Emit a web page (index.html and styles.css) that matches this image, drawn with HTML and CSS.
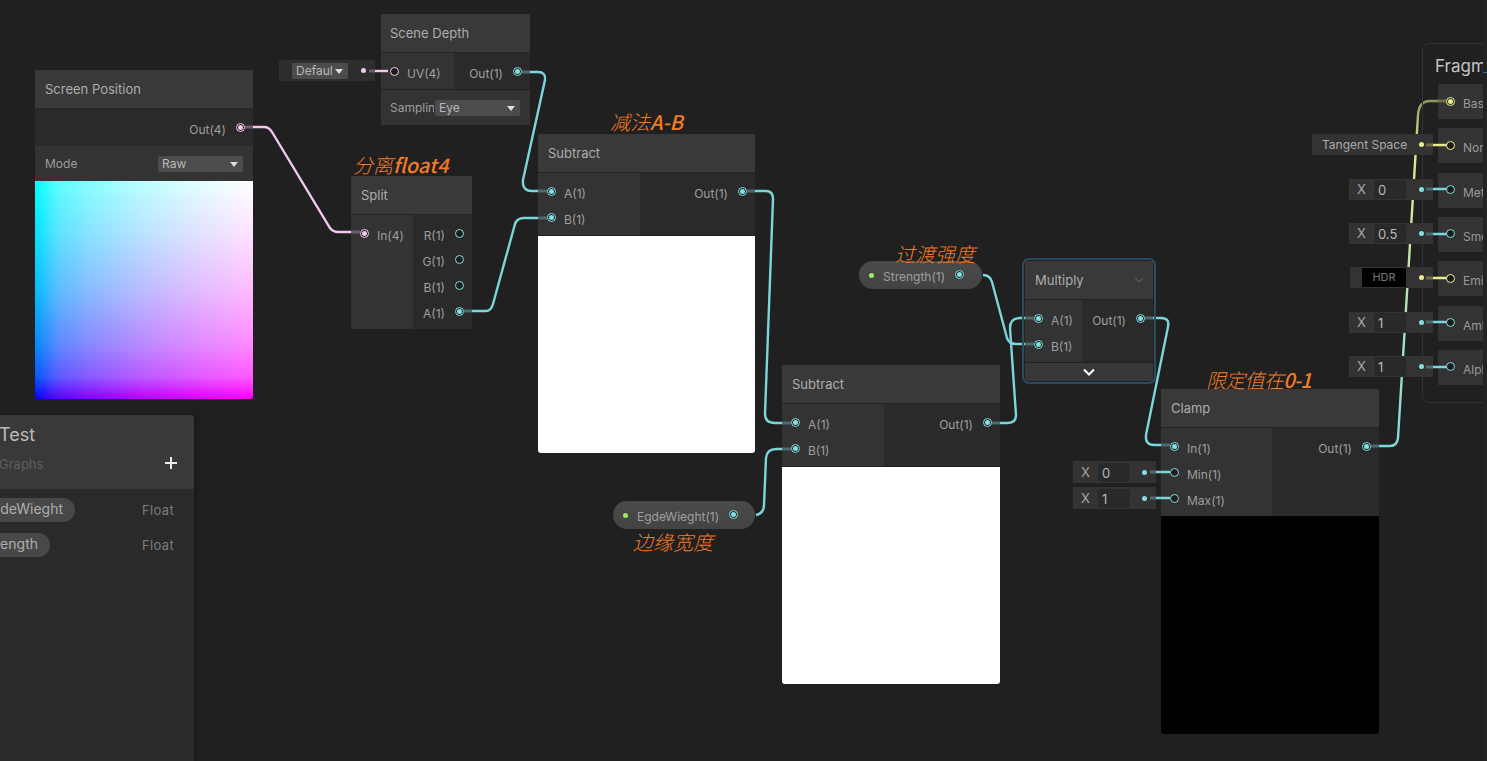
FILE: index.html
```html
<!DOCTYPE html>
<html lang="en">

<head>
    <meta charset="UTF-8">
    <title>Shader Graph</title>
    <link rel="stylesheet" href="styles.css">
</head>

<body>
    <div class="graph">
        <!-- Wires between nodes, these run under the nodes -->
        <svg class="wires" width="1487" height="761" viewBox="0 0 1487 761" fill="none">
            <defs>
                <linearGradient id="baseWire" gradientUnits="userSpaceOnUse" x1="1390" y1="446" x2="1438" y2="100">
                    <stop offset="0" stop-color="#7fd8de" />
                    <stop offset="0.5" stop-color="#bfe6b0" />
                    <stop offset="0.85" stop-color="#dfe690" />
                    <stop offset="1" stop-color="#8f9460" />
                </linearGradient>
            </defs>
            <path class="wire pink" d="M253 127 H264 Q269 127 272 132 L330 228 Q333 232 338 232 H351" />
            <path class="wire cyan" d="M530 72 H538 Q546 72 545 80 L523 180 Q522 191 532 191 H538" />
            <path class="wire cyan" d="M472 311 H486 Q491 311 493 304 L515 224 Q517 218 524 218 H538" />
            <path class="wire cyan" d="M755 191 H766 Q773 191 773 199 L765 414 Q765 423 775 423 H782" />
            <path class="wire cyan" d="M756 515 Q764 513 764 505 L766 458 Q767 449 776 449 H782" />
            <path class="wire cyan" d="M1000 423 H1008 Q1016 423 1016 415 L1010 328 Q1010 318 1020 318 H1025" />
            <path class="wire cyan" d="M983 275 Q990 275 992 282 L1007 338 Q1009 344 1016 344 H1025" />
            <path class="wire cyan" d="M1153 318 H1161 Q1170 318 1168 327 L1146 435 Q1145 445 1154 445 H1161" />
            <path class="wire" stroke="url(#baseWire)" d="M1379 446 H1390 Q1397 446 1398 438 L1418 115 Q1419 101 1430 101 H1438" />
        </svg>

        <div class="node node-screen">
            <div class="node-title">Screen Position</div>
            <div class="ports">
                <div class="port-col col-out">
                    <div class="port-row"><span class="port-label">Out(4)</span><span class="port on pink"></span></div>
                </div>
            </div>
            <div class="control-row">
                <span>Mode</span>
                <div class="dropdown dropdown-wide">Raw<i class="caret"></i></div>
            </div>
            <div class="preview preview-uv"></div>
        </div>

        <div class="node node-depth">
            <div class="node-title">Scene Depth</div>
            <div class="ports">
                <div class="port-col col-in">
                    <div class="port-row"><span class="port open pink"></span><span class="port-label">UV(4)</span></div>
                </div>
                <div class="port-col col-out">
                    <div class="port-row"><span class="port-label">Out(1)</span><span class="port on cyan"></span></div>
                </div>
            </div>
            <div class="control-row">
                <span class="clipped">Sampling</span>
                <div class="dropdown dropdown-wide">Eye<i class="caret"></i></div>
            </div>
        </div>

        <div class="node node-split">
            <div class="node-title">Split</div>
            <div class="ports">
                <div class="port-col col-in">
                    <div class="port-row"><span class="port on pink"></span><span class="port-label">In(4)</span></div>
                </div>
                <div class="port-col col-out">
                    <div class="port-row"><span class="port-label">R(1)</span><span class="port open cyan"></span></div>
                    <div class="port-row"><span class="port-label">G(1)</span><span class="port open cyan"></span></div>
                    <div class="port-row"><span class="port-label">B(1)</span><span class="port open cyan"></span></div>
                    <div class="port-row"><span class="port-label">A(1)</span><span class="port on cyan"></span></div>
                </div>
            </div>
        </div>

        <div class="node node-sub-a">
            <div class="node-title">Subtract</div>
            <div class="ports">
                <div class="port-col col-in">
                    <div class="port-row"><span class="port on cyan"></span><span class="port-label">A(1)</span></div>
                    <div class="port-row"><span class="port on cyan"></span><span class="port-label">B(1)</span></div>
                </div>
                <div class="port-col col-out">
                    <div class="port-row"><span class="port-label">Out(1)</span><span class="port on cyan"></span></div>
                </div>
            </div>
            <div class="preview preview-white"></div>
        </div>

        <div class="node node-sub-b">
            <div class="node-title">Subtract</div>
            <div class="ports">
                <div class="port-col col-in">
                    <div class="port-row"><span class="port on cyan"></span><span class="port-label">A(1)</span></div>
                    <div class="port-row"><span class="port on cyan"></span><span class="port-label">B(1)</span></div>
                </div>
                <div class="port-col col-out">
                    <div class="port-row"><span class="port-label">Out(1)</span><span class="port on cyan"></span></div>
                </div>
            </div>
            <div class="preview preview-white"></div>
        </div>

        <div class="node node-multiply">
            <div class="node-title">
                Multiply
                <svg class="title-chevron" width="10" height="6" viewBox="0 0 10 6" fill="none"><path d="M1 1 L5 5 L9 1" stroke="#5a5a5a" stroke-width="1.2" /></svg>
            </div>
            <div class="ports">
                <div class="port-col col-in">
                    <div class="port-row"><span class="port on cyan"></span><span class="port-label">A(1)</span></div>
                    <div class="port-row"><span class="port on cyan"></span><span class="port-label">B(1)</span></div>
                </div>
                <div class="port-col col-out">
                    <div class="port-row"><span class="port-label">Out(1)</span><span class="port on cyan"></span></div>
                </div>
            </div>
            <div class="collapse-bar">
                <svg width="12" height="8" viewBox="0 0 12 8" fill="none"><path d="M1 1.5 L6 6.5 L11 1.5" stroke="#fff" stroke-width="2" /></svg>
            </div>
        </div>

        <div class="node node-clamp">
            <div class="node-title">Clamp</div>
            <div class="ports">
                <div class="port-col col-in">
                    <div class="port-row"><span class="port on cyan"></span><span class="port-label">In(1)</span></div>
                    <div class="port-row"><span class="port open cyan"></span><span class="port-label">Min(1)</span></div>
                    <div class="port-row"><span class="port open cyan"></span><span class="port-label">Max(1)</span></div>
                </div>
                <div class="port-col col-out">
                    <div class="port-row"><span class="port-label">Out(1)</span><span class="port on cyan"></span></div>
                </div>
            </div>
            <div class="preview preview-black"></div>
        </div>

        <!-- Properties dropped on the graph -->
        <div class="pill pill-strength"><i class="pill-dot"></i><span>Strength(1)</span><span class="port on cyan"></span></div>
        <div class="pill pill-edge"><i class="pill-dot"></i><span>EgdeWieght(1)</span><span class="port on cyan"></span></div>

        <!-- Inline values next to input ports -->
        <div class="inline inline-uv">
            <div class="dropdown dropdown-default"><span class="clipped">Default</span><i class="caret"></i></div>
            <i class="inline-dot pink"></i>
        </div>
        <div class="inline inline-min"><span class="axis">X</span><span class="field">0</span><i class="inline-dot cyan"></i></div>
        <div class="inline inline-max"><span class="axis">X</span><span class="field">1</span><i class="inline-dot cyan"></i></div>

        <!-- Master stack, runs off the right edge -->
        <div class="stack">
            <div class="stack-title">Fragment</div>
            <div class="stack-rows">
                <div class="block"><span class="port on yellow"></span><span class="port-label">Base Color(3)</span></div>
                <div class="block"><span class="port open yellow"></span><span class="port-label">Normal(3)</span></div>
                <div class="block"><span class="port open cyan"></span><span class="port-label">Metallic(1)</span></div>
                <div class="block"><span class="port open cyan"></span><span class="port-label">Smoothness(1)</span></div>
                <div class="block"><span class="port open yellow"></span><span class="port-label">Emission(3)</span></div>
                <div class="block"><span class="port open cyan"></span><span class="port-label">Ambient(1)</span></div>
                <div class="block"><span class="port open cyan"></span><span class="port-label">Alpha(1)</span></div>
            </div>
        </div>
        <div class="stack-edge"><i class="edge-tick"></i></div>

        <div class="stack-inputs">
            <div class="stack-input"></div>
            <div class="stack-input"><div class="inline inline-stack inline-tangent"><span class="tangent-text">Tangent Space</span><i class="inline-dot yellow"></i></div></div>
            <div class="stack-input"><div class="inline inline-stack"><span class="axis">X</span><span class="field">0</span><i class="inline-dot cyan"></i></div></div>
            <div class="stack-input"><div class="inline inline-stack"><span class="axis">X</span><span class="field">0.5</span><i class="inline-dot cyan"></i></div></div>
            <div class="stack-input"><div class="inline inline-stack inline-hdr"><span class="hdr-field">HDR</span><i class="inline-dot yellow"></i></div></div>
            <div class="stack-input"><div class="inline inline-stack"><span class="axis">X</span><span class="field">1</span><i class="inline-dot cyan"></i></div></div>
            <div class="stack-input"><div class="inline inline-stack"><span class="axis">X</span><span class="field">1</span><i class="inline-dot cyan"></i></div></div>
        </div>

        <!-- Short connector pieces that sit on top of the nodes -->
        <svg class="stubs" width="1487" height="761" viewBox="0 0 1487 761" fill="none">
            <g class="stub-dim">
                <path class="dim-pink" d="M245 127 H253 M351 232 H360 M369 71 H375" />
                <path class="dim-cyan" d="M522 72 H530 M464 311 H472 M538 191 H547 M538 218 H547 M747 191 H755" />
                <path class="dim-cyan" d="M782 423 H791 M782 449 H791 M991 423 H1000 M1025 318 H1034 M1025 344 H1034 M1144 318 H1153" />
                <path class="dim-cyan" d="M1161 445 H1170 M1371 446 H1379 M1150 472 H1156 M1150 498 H1156" />
                <path class="dim-cyan" d="M1426 189 H1433 M1426 234 H1433 M1426 322 H1433 M1426 367 H1433" />
                <path class="dim-yellow" d="M1426 145 H1433 M1426 278 H1433 M1438 101 H1447" />
            </g>
            <path class="stub pink" d="M375 71 H388" />
            <path class="stub cyan" d="M1156 472 H1170 M1156 498 H1170" />
            <path class="stub cyan" d="M1433 189 H1447 M1433 234 H1447 M1433 322 H1447 M1433 367 H1447" />
            <path class="stub yellow" d="M1433 145 H1447 M1433 278 H1447" />
        </svg>

        <!-- Notes written over the graph -->
        <div class="note note-split">分离<span class="note-latin">float4</span></div>
        <div class="note note-sub">减法<span class="note-latin">A-B</span></div>
        <div class="note note-strength">过渡强度</div>
        <div class="note note-edge">边缘宽度</div>
        <div class="note note-clamp">限定值在<span class="note-latin">0-1</span></div>

        <!-- Blackboard -->
        <div class="blackboard">
            <div class="board-head">
                <div class="board-title">Test</div>
                <div class="board-sub">
                    <span>Graphs</span>
                    <svg width="14" height="14" viewBox="0 0 14 14"><path d="M7 1 V13 M1 7 H13" stroke="#eee" stroke-width="2" /></svg>
                </div>
            </div>
            <div class="board-body">
                <div class="board-row">
                    <span class="board-pill pill-long">EgdeWieght</span>
                    <span class="board-type">Float</span>
                </div>
                <div class="board-row">
                    <span class="board-pill pill-short">Strength</span>
                    <span class="board-type">Float</span>
                </div>
            </div>
        </div>
    </div>
</body>

</html>
```

FILE: styles.css
```css
* {
    box-sizing: border-box;
}

body {
    margin: 0;
    background-color: #202020;
    font-family: Inter, "Noto Sans", sans-serif;
    overflow: hidden;
}

.graph {
    position: relative;
    width: 1487px;
    height: 761px;
    overflow: hidden;
    background-color: #202020;
}

.wires,
.stubs {
    position: absolute;
    left: 0;
    top: 0;
}

.stubs {
    z-index: 3;
    pointer-events: none;
}

.wire,
.stub {
    stroke-width: 2.4;
}

.wire.pink,
.stub.pink {
    stroke: #f3c8ef;
}

.wire.cyan,
.stub.cyan {
    stroke: #7bd6dc;
}

.stub.yellow {
    stroke: #e9e98a;
}

.stub-dim path {
    stroke-width: 3;
}

.dim-pink {
    stroke: #6d5d6b;
}

.dim-cyan {
    stroke: #4d6a6d;
}

.dim-yellow {
    stroke: #6d6d4c;
}

/* Nodes */
.node {
    position: absolute;
    color: #9f9f9f;
    font-size: 12px;
}

.node-screen {
    left: 35px;
    top: 70px;
    width: 218px;
}

.node-depth {
    left: 381px;
    top: 14px;
    width: 149px;
}

.node-split {
    left: 351px;
    top: 176px;
    width: 121px;
}

.node-sub-a {
    left: 538px;
    top: 134px;
    width: 217px;
}

.node-sub-b {
    left: 782px;
    top: 365px;
    width: 218px;
}

.node-multiply {
    left: 1025px;
    top: 261px;
    width: 128px;
    outline: 2px solid #2a4c5c;
    outline-offset: 1px;
    border-radius: 4px;
}

.node-clamp {
    left: 1161px;
    top: 389px;
    width: 218px;
}

.node-title {
    display: flex;
    align-items: center;
    justify-content: space-between;
    height: 39px;
    padding: 0 9px 0 10px;
    background-color: #393939;
    border-bottom: 1px solid #252525;
    color: #adadad;
    font-size: 13px;
}

.node-depth .node-title {
    padding-left: 9px;
}

.ports {
    display: flex;
    background-color: #2a2a2a;
}

.port-col {
    padding: 5px 0;
}

.col-in {
    flex: none;
    background-color: #333;
}

.col-out {
    flex: 1;
}

.node-screen .ports {
    height: 37px;
}

.node-depth .ports {
    height: 36px;
}

.node-depth .col-in {
    width: 73px;
}

.node-split .col-in {
    width: 62px;
}

.node-sub-a .col-in,
.node-sub-b .col-in {
    width: 102px;
}

.node-multiply .col-in {
    width: 57px;
}

.node-clamp .col-in {
    width: 111px;
}

.port-row {
    display: flex;
    align-items: center;
    height: 26px;
    gap: 8px;
    padding: 0 9px;
}

.col-out .port-row {
    justify-content: flex-end;
    gap: 10px;
    padding-right: 8px;
}

.port-label {
    padding-top: 5px;
    white-space: nowrap;
}

/* Ports */
.port {
    position: relative;
    z-index: 4;
    flex: none;
    width: 9px;
    height: 9px;
    border: 1px solid;
    border-radius: 50%;
    background-color: #1d1d1d;
}

.port.on::after {
    content: "";
    position: absolute;
    left: 1px;
    top: 1px;
    width: 5px;
    height: 5px;
    border-radius: 50%;
    background-color: currentColor;
}

.pink {
    color: #f3c8ef;
}

.cyan {
    color: #84dfe2;
}

.yellow {
    color: #f0ee8c;
}

.control-row {
    display: flex;
    align-items: center;
    justify-content: space-between;
    height: 35px;
    margin-top: 1px;
    padding: 0 10px;
    background-color: #333;
}

.node-screen .control-row {
    margin-top: 0;
}

.clipped {
    display: block;
    overflow: hidden;
    white-space: nowrap;
}

.node-depth .control-row {
    padding-left: 9px;
    gap: 1px;
}

.node-depth .clipped {
    width: 45px;
}

.dropdown {
    position: relative;
    display: flex;
    align-items: center;
    height: 16px;
    padding-left: 4px;
    border-radius: 2px;
    background-color: #4c4c4c;
    color: #b8b8b8;
    font-size: 12px;
}

.dropdown-wide {
    flex: none;
    width: 85px;
}

.caret {
    position: absolute;
    right: 5px;
    top: 6px;
    border-left: 4px solid transparent;
    border-right: 4px solid transparent;
    border-top: 5px solid #ddd;
}

/* Previews */
.preview {
    height: 217px;
    margin-top: 1px;
    border-radius: 0 0 3px 3px;
}

.node-screen .preview {
    height: 218px;
    margin-top: 0;
}

.preview-uv {
    background-color: #0000ff;
    background-image:
        linear-gradient(to right, #000, #590000 10%, #890000 25%, #bc0000 50%, #e10000 75%, #f00),
        linear-gradient(to top, #000, #005900 10%, #008900 25%, #00bc00 50%, #00e100 75%, #0f0);
    background-blend-mode: screen;
}

.preview-white {
    background-color: #fff;
}

.preview-black {
    height: 218px;
    margin-top: 0;
    background-color: #000;
}

.collapse-bar {
    display: flex;
    align-items: center;
    justify-content: center;
    height: 18px;
    margin-top: 1px;
    border-radius: 0 0 3px 3px;
    background-color: #383838;
}

/* Property pills */
.pill {
    position: absolute;
    display: flex;
    align-items: center;
    height: 28px;
    padding-left: 10px;
    border-radius: 14px;
    background-image: linear-gradient(#4a4a4a, #434343);
    color: #a0a0a0;
    font-size: 12px;
}

.pill-strength {
    left: 859px;
    top: 261px;
    width: 123px;
}

.pill-edge {
    left: 613px;
    top: 501px;
    width: 142px;
}

.pill-dot {
    flex: none;
    width: 5px;
    height: 5px;
    margin-right: 9px;
    border-radius: 50%;
    background-color: #9fe86a;
}

.pill .port {
    margin-left: 10px;
    margin-top: -2px;
}

.pill span:nth-child(2) {
    padding-top: 2px;
}

/* Inline values */
.inline {
    position: absolute;
    display: flex;
    align-items: center;
    height: 21px;
    background-color: #333;
    color: #aaa;
    font-size: 12px;
}

.inline-uv {
    left: 279px;
    top: 60px;
    width: 96px;
    padding-left: 13px;
    background-color: #2e2e2e;
}

.dropdown-default {
    width: 56px;
    flex: none;
}

.dropdown-default .clipped {
    width: 37px;
}

.inline-min {
    left: 1073px;
    top: 461px;
    width: 83px;
    height: 22px;
}

.inline-max {
    left: 1073px;
    top: 487px;
    width: 83px;
    height: 22px;
}

.axis {
    flex: none;
    width: 25px;
    text-align: center;
    font-size: 13px;
}

.field {
    flex: none;
    width: 32px;
    height: 19px;
    padding: 2px 0 0 4px;
    border-radius: 3px;
    background-color: #292929;
    color: #b8b8b8;
    font-size: 13px;
}

.inline-dot {
    position: relative;
    z-index: 4;
    flex: none;
    width: 5px;
    height: 5px;
    margin-left: auto;
    margin-right: 9px;
    border-radius: 50%;
    background-color: currentColor;
}

/* Master stack */
.stack {
    position: absolute;
    left: 1422px;
    top: 43px;
    width: 100px;
    height: 360px;
    border: 1px solid #333;
    border-radius: 8px;
}

.stack-title {
    height: 40px;
    padding: 12px 0 0 12px;
    color: #c4c4c4;
    font-size: 17px;
    white-space: nowrap;
}

.stack-rows {
    display: flex;
    flex-direction: column;
    gap: 9.33px;
    height: 302px;
    margin-left: 15px;
}

.block {
    display: flex;
    flex: none;
    align-items: center;
    gap: 8px;
    width: 45px;
    height: 35px;
    padding: 0 8px;
    overflow: hidden;
    background-color: #333;
    color: #999;
    font-size: 12px;
}

.block .port {
    margin-top: -1px;
}

.block .port-label {
    padding-top: 4px;
}

.stack-edge {
    position: absolute;
    left: 1483px;
    top: 0;
    width: 4px;
    height: 761px;
    background-color: #232323;
}

.edge-tick {
    display: block;
    height: 1px;
    margin-top: 72px;
    background-color: #2f6fb0;
}

.stack-inputs {
    position: absolute;
    left: 1300px;
    top: 84px;
    display: flex;
    flex-direction: column;
    gap: 9.33px;
    width: 133px;
}

.stack-input {
    position: relative;
    height: 35px;
}

.inline-stack {
    right: 0;
    top: 6px;
    width: 84px;
}

.inline-tangent {
    width: 121px;
    padding-left: 10px;
}

.tangent-text {
    white-space: nowrap;
}

.inline-hdr {
    width: 83px;
    padding-left: 12px;
}

.hdr-field {
    flex: none;
    width: 44px;
    height: 19px;
    background-color: #000;
    color: #777;
    font-size: 11px;
    line-height: 19px;
    text-align: center;
}

/* Notes */
.note {
    position: absolute;
    z-index: 5;
    color: #f27c26;
    font-family: "Noto Sans CJK SC", Inter, sans-serif;
    font-size: 20px;
    font-style: italic;
    font-weight: 300;
    line-height: 26px;
    white-space: nowrap;
}

.note-latin {
    font-weight: 500;
}

.note-split {
    left: 353px;
    top: 152px;
}

.note-sub {
    left: 610px;
    top: 109px;
}

.note-strength {
    left: 895px;
    top: 241px;
}

.note-edge {
    left: 633px;
    top: 529px;
}

.note-clamp {
    left: 1206px;
    top: 367px;
    letter-spacing: -0.7px;
}

/* Blackboard */
.blackboard {
    position: absolute;
    z-index: 6;
    left: -20px;
    top: 415px;
    width: 214px;
    height: 346px;
    border-radius: 0 4px 0 0;
    background-color: #2a2a2a;
    box-shadow: 2px 0 5px rgba(0, 0, 0, 0.25);
}

.board-head {
    height: 74px;
    padding: 9px 16px 0 19px;
    border-radius: 0 4px 0 0;
    background-color: #393939;
}

.board-title {
    height: 22px;
    color: #bcbcbc;
    font-size: 18px;
    line-height: 22px;
}

.board-sub {
    display: flex;
    align-items: center;
    justify-content: space-between;
    margin-top: 10px;
    color: #5f5f5f;
    font-size: 13px;
}

.board-sub svg {
    margin-top: -3px;
}

.board-body {
    display: flex;
    flex-direction: column;
    gap: 11px;
    padding: 9px 20px 0 0;
}

.board-row {
    display: flex;
    align-items: center;
    justify-content: space-between;
}

.board-pill {
    display: block;
    height: 24px;
    padding-right: 12px;
    overflow: hidden;
    border-radius: 0 12px 12px 0;
    background-color: #484848;
    color: #adadad;
    direction: rtl;
    font-size: 14px;
    line-height: 22px;
    white-space: nowrap;
}

.pill-long {
    width: 95px;
}

.pill-short {
    width: 70px;
}

.board-type {
    color: #7d7d7d;
    font-size: 13px;
    letter-spacing: 0.35px;
}
```
